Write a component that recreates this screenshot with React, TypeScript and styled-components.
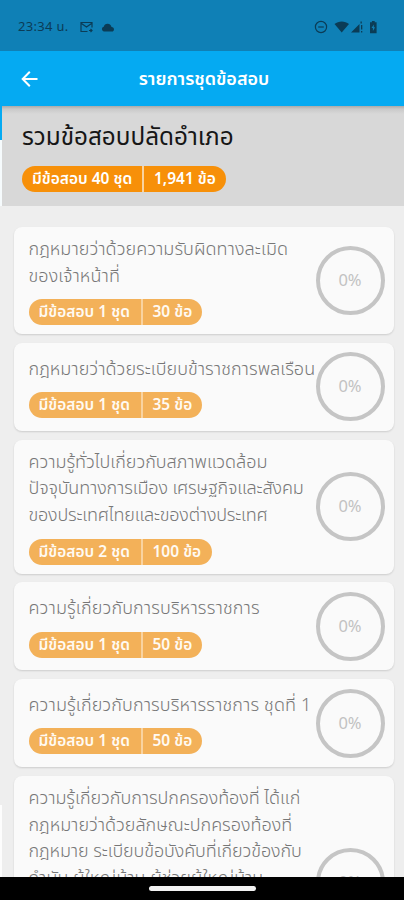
import React from "react";
import styled, { createGlobalStyle } from "styled-components";

const GlobalStyle = createGlobalStyle`
  * { box-sizing: border-box; }
  body { margin: 0; overflow: hidden; font-family: "Noto Sans Thai", "Noto Sans", "Open Sans", sans-serif; }
`;

const Screen = styled.main`
  width: 404px;
  height: 900px;
  display: flex;
  flex-direction: column;
  overflow: hidden;
  background: #eee;
`;

const StatusBar = styled.div`
  height: 51px;
  flex: none;
  display: flex;
  align-items: center;
  padding: 3px 25px 0 18px;
  background: #0f80b6;
  color: #0b3c56;
`;

const Clock = styled.span`
  width: 62px;
  font-size: 13px;
  letter-spacing: 0.3px;
  white-space: nowrap;
`;

const StatusIcons = styled.div<{ $end?: boolean }>`
  display: flex;
  align-items: center;
  gap: 8px;
  margin-left: ${(p) => (p.$end ? "auto" : "0")};
  svg { display: block; }
`;

const AppBar = styled.header`
  height: 55px;
  flex: none;
  display: grid;
  grid-template-columns: 60px 1fr 56px;
  align-items: center;
  background: #05aaf2;
  color: #fff;
  svg { display: block; margin-left: 20px; }
`;

const BarTitle = styled.h1`
  margin: 2px 0 0;
  text-align: center;
  font-size: 18px;
  line-height: 24px;
  font-weight: 600;
  white-space: nowrap;
`;

const Body = styled.div`
  flex: 1;
  min-height: 0;
  overflow: hidden;
  padding-left: 2px;
  background: linear-gradient(#05aaf2 0 34px, #f6fbfd 34px 100px, #eee 100px 699px, #fdfdfd 699px) 0 0 / 2px 100% no-repeat;
`;

const Summary = styled.section`
  height: 100px;
  padding: 16px 20px 0;
  background: linear-gradient(#aaa, #c9c9c9 3px, #d8d8d8 8px);
`;

const SummaryTitle = styled.h2`
  margin: 0 0 12px;
  font-size: 24.3px;
  line-height: 32px;
  font-weight: 400;
  color: #161616;
  white-space: nowrap;
`;

const Badge = styled.div<{ $strong?: boolean }>`
  display: flex;
  width: max-content;
  height: 26px;
  line-height: 28px;
  border-radius: 13px;
  overflow: hidden;
  background: ${(p) => (p.$strong ? "#f79009" : "#f3b159")};
  color: ${(p) => (p.$strong ? "#fff" : "#fffaf2")};
  font-size: 15.5px;
  font-weight: 600;
  white-space: nowrap;
`;

const BadgePart = styled.span<{ $w: number; $first?: boolean }>`
  width: ${(p) => p.$w}px;
  padding-left: 10px;
  border-right: ${(p) => (p.$first ? "2px solid #f9d3a0" : "0")};
`;

const List = styled.div`
  padding: 21px 10px 0 12px;
  display: flex;
  flex-direction: column;
  gap: 8.8px;
`;

const Card = styled.article`
  display: flex;
  align-items: center;
  justify-content: space-between;
  min-height: 88px;
  flex: none;
  padding: 9px 9.5px 9px 14.5px;
  border-radius: 8px;
  background: #fafafa;
  box-shadow: 0 1px 2px rgba(0, 0, 0, 0.14);
`;

const CardText = styled.div`
  width: 288px;
  margin-right: -10px;
`;

const Lines = styled.div<{ $rows: number }>`
  min-height: ${(p) => p.$rows * 26.6}px;
  margin-bottom: 10px;
`;

const Line = styled.div<{ $ls: number }>`
  height: 26.6px;
  line-height: 28.6px;
  font-size: 18px;
  font-weight: 300;
  letter-spacing: ${(p) => p.$ls}px;
  color: #777;
  white-space: nowrap;
`;

const Ring = styled.div`
  width: 69px;
  height: 69px;
  flex: none;
  display: grid;
  place-items: center;
  border: 4.5px solid #c5c5c5;
  border-radius: 50%;
  color: #c2c2c2;
  font-size: 16.5px;
`;

const NavBar = styled.footer`
  height: 23px;
  flex: none;
  display: flex;
  justify-content: center;
  padding-top: 9px;
  background: #000;
`;

const Handle = styled.div`
  width: 107px;
  height: 5px;
  border-radius: 3px;
  background: #f2f2f2;
`;

type Entry = { lines: [string, number][]; rows?: number; sets?: number; items?: number };

const entries: Entry[] = [
  { lines: [["กฎหมายว่าด้วยความรับผิดทางละเมิด", 0.05], ["ของเจ้าหน้าที่", 0.1]], sets: 1, items: 30 },
  { lines: [["กฎหมายว่าด้วยระเบียบข้าราชการพลเรือน", 0.04]], sets: 1, items: 35 },
  { lines: [["ความรู้ทั่วไปเกี่ยวกับสภาพแวดล้อม", -0.03], ["ปัจจุบันทางการเมือง เศรษฐกิจและสังคม", -0.15], ["ของประเทศไทยและของต่างประเทศ", -0.21]], sets: 2, items: 100 },
  { lines: [["ความรู้เกี่ยวกับการบริหารราชการ", 0.14]], sets: 1, items: 50 },
  { lines: [["ความรู้เกี่ยวกับการบริหารราชการ ชุดที่ 1", 0.12]], sets: 1, items: 50 },
  {
    rows: 6,
    lines: [
      ["ความรู้เกี่ยวกับการปกครองท้องที่ ได้แก่", -0.04],
      ["กฎหมายว่าด้วยลักษณะปกครองท้องที่", -0.02],
      ["กฎหมาย ระเบียบข้อบังคับที่เกี่ยวข้องกับ", -0.09],
      ["กำนัน ผู้ใหญ่บ้าน ผู้ช่วยผู้ใหญ่บ้าน", 0],
    ],
  },
];

export default function App() {
  return (
    <Screen>
      <GlobalStyle />
      <StatusBar>
        <Clock>23:34 น.</Clock>
        <StatusIcons>
          <svg width="13" height="12" viewBox="0 0 13 12" fill="none" stroke="currentColor" strokeWidth="1.2">
            <path d="M7.5 10.5H1V1.5h11v5M1.5 2.5l5 3.500 5-3.500M9 9.5h3M10.500 8l1.500 1.500-1.500 1.500" />
          </svg>
          <svg width="14" height="9" viewBox="0 0 14 9" fill="currentColor">
            <path d="M2.700 8.500a2.500 2.500 0 0 1 0-4.800A4 4 0 0 1 10.500 4 2.400 2.400 0 0 1 11.800 8.500Z" />
          </svg>
        </StatusIcons>
        <StatusIcons $end>
          <svg width="65" height="14" viewBox="0 0 65 14" fill="currentColor">
            <circle cx="7" cy="7" r="5.6" fill="none" stroke="currentColor" strokeWidth="1.2" />
            <path d="M4.200 6.400h5.600v1.200H4.200z" />
            <path d="M20.500 4C24.500.600 31 .600 35 4L27.700 12.500Z" />
            <path d="M37 12.500 45.500 4v8.500zM46.500 1.500h1.300v2h-1.300zM47 5h1.300v4.500H47zM47 11h1.300v1.500H47z" />
            <path fillRule="evenodd" d="M56 2.200h1.900V1h2.800v1.200h1.900v11H56zM59.800 4.500 57.500 8h1.400v3l2.200-3.700h-1.300z" />
          </svg>
        </StatusIcons>
      </StatusBar>
      <AppBar>
        <svg width="20" height="18" viewBox="0 0 20 18" fill="none" stroke="#fff" strokeWidth="2">
          <path d="M17.500 9H3M9.800 1.800 2.700 9l7.100 7.200" />
        </svg>
        <BarTitle>รายการชุดข้อสอบ</BarTitle>
      </AppBar>
      <Body>
        <Summary>
          <SummaryTitle>รวมข้อสอบปลัดอำเภอ</SummaryTitle>
          <Badge $strong>
            <BadgePart $first $w={122}>มีข้อสอบ 40 ชุด</BadgePart>
            <BadgePart $w={82}>1,941 ข้อ</BadgePart>
          </Badge>
        </Summary>
        <List>
          {entries.map((e, i) => (
            <Card key={i}>
              <CardText>
                <Lines $rows={e.rows ?? e.lines.length}>
                  {e.lines.map(([text, ls]) => <Line key={text} $ls={ls}>{text}</Line>)}
                </Lines>
                <Badge>
                  {e.items && (
                    <>
                      <BadgePart $first $w={114}>มีข้อสอบ {e.sets} ชุด</BadgePart>
                      <BadgePart $w={e.items > 99 ? 69 : 59}>{e.items} ข้อ</BadgePart>
                    </>
                  )}
                </Badge>
              </CardText>
              <Ring>0%</Ring>
            </Card>
          ))}
        </List>
      </Body>
      <NavBar><Handle /></NavBar>
    </Screen>
  );
}
